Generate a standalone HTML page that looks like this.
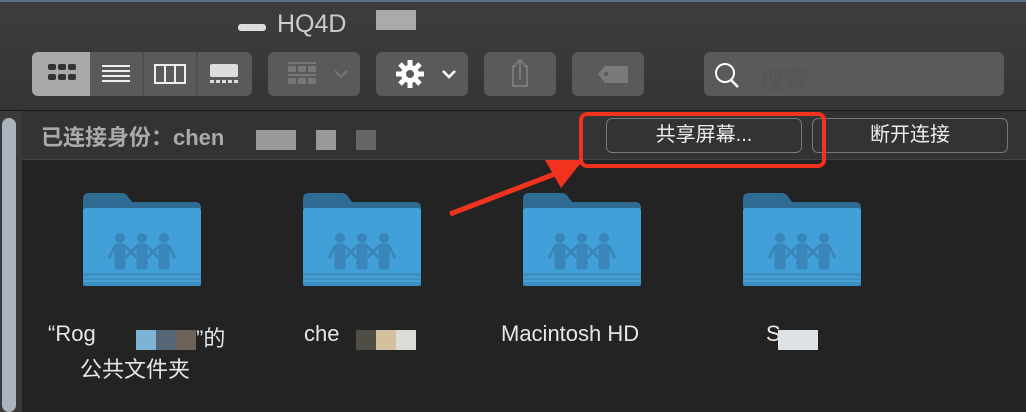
<!DOCTYPE html>
<html><head><meta charset="utf-8"><style>
body{margin:0;width:1026px;height:412px;overflow:hidden;background:#232323;font-family:"Liberation Sans","Noto Sans CJK SC",sans-serif;position:relative}
.abs{position:absolute}
.tb{left:0;top:0;width:1026px;height:110px;background:linear-gradient(#3d3d3d,#353535);border-bottom:1px solid #1a1a1a}
.btn{position:absolute;top:52px;height:44px;background:#5a5a5a;border-radius:6px}
.bar{left:22px;top:111px;width:1004px;height:48px;background:#333;border-bottom:1px solid #444}
.ob{position:absolute;top:118px;height:35px;border:1.5px solid #777;border-radius:6px;color:#eee;font-size:20px;text-align:center;line-height:33px;box-sizing:border-box}
.lbl{position:absolute;color:#e6e6e6;font-size:22px;text-align:center}
</style></head><body>
<div class="abs tb"></div>
<div class="abs" style="left:0;top:0;width:1026px;height:2px;background:#5a6e8a"></div>
<div class="abs" style="left:238px;top:24px;width:28px;height:7px;background:#ddd;border-radius:3px"></div>
<div class="abs" style="left:277px;top:10px;color:#ccc;font-size:25px">HQ4D</div>
<div class="abs" style="left:376px;top:10px;width:40px;height:20px;background:#aaa"></div>
<div class="btn" style="left:32px;width:220px"></div>
<div class="btn" style="left:32px;width:58px;background:#a9a9a9;border-radius:6px 0 0 6px"></div>
<svg class="abs" style="left:32px;top:52px" width="220" height="44">
<g fill="#333"><rect x="16" y="12" width="8" height="6" rx="2"/><rect x="26" y="12" width="8" height="6" rx="2"/><rect x="36" y="12" width="8" height="6" rx="2"/><rect x="16" y="22" width="8" height="6" rx="2"/><rect x="26" y="22" width="8" height="6" rx="2"/><rect x="36" y="22" width="8" height="6" rx="2"/></g>
<g stroke="#eee" stroke-width="2"><line x1="70" y1="14" x2="98" y2="14"/><line x1="70" y1="19" x2="98" y2="19"/><line x1="70" y1="24" x2="98" y2="24"/><line x1="70" y1="29" x2="98" y2="29"/></g>
<line x1="111" y1="0" x2="111" y2="44" stroke="#444"/><line x1="165" y1="0" x2="165" y2="44" stroke="#444"/>
<g fill="none" stroke="#eee" stroke-width="2"><rect x="123" y="13" width="30" height="18"/><line x1="133" y1="13" x2="133" y2="31"/><line x1="143" y1="13" x2="143" y2="31"/></g>
<rect x="178" y="12" width="28" height="13" fill="#ddd" rx="2"/><g fill="#ddd"><rect x="178" y="28" width="4" height="3"/><rect x="184" y="28" width="4" height="3"/><rect x="190" y="28" width="4" height="3"/><rect x="196" y="28" width="4" height="3"/><rect x="202" y="28" width="4" height="3"/></g>
</svg>
<div class="btn" style="left:268px;width:92px"></div>
<svg class="abs" style="left:268px;top:52px" width="92" height="44"><g fill="#777"><rect x="20" y="10" width="28" height="2"/><rect x="20" y="14" width="8" height="6" rx="1"/><rect x="30" y="14" width="8" height="6" rx="1"/><rect x="40" y="14" width="8" height="6" rx="1"/><rect x="20" y="22" width="28" height="2"/><rect x="20" y="26" width="8" height="6" rx="1"/><rect x="30" y="26" width="8" height="6" rx="1"/><rect x="40" y="26" width="8" height="6" rx="1"/></g><path d="M67 19l6 6 6-6" stroke="#777" stroke-width="2" fill="none"/></svg>
<div class="btn" style="left:376px;width:92px"></div>
<svg class="abs" style="left:376px;top:52px" width="92" height="44"><g transform="translate(34,22)"><circle r="9" fill="#fff"/><g stroke="#fff" stroke-width="5"><line x1="0" y1="-14" x2="0" y2="14"/><line x1="-14" y1="0" x2="14" y2="0"/><line x1="-10" y1="-10" x2="10" y2="10"/><line x1="-10" y1="10" x2="10" y2="-10"/></g><circle r="4" fill="#5a5a5a"/></g><path d="M67 19l6 6 6-6" stroke="#fff" stroke-width="2.5" fill="none"/></svg>
<div class="btn" style="left:484px;width:72px"></div>
<svg class="abs" style="left:484px;top:52px" width="72" height="44"><path d="M32 14h-3v20h14v-20h-3M36 28v-20M31 13l5-5 5 5" stroke="#7a7a7a" stroke-width="2" fill="none"/></svg>
<div class="btn" style="left:572px;width:72px"></div>
<svg class="abs" style="left:572px;top:52px" width="72" height="44"><path d="M26 22l7-8h23v17h-23z" fill="#7a7a7a"/><circle cx="34" cy="22" r="2" fill="#5a5a5a"/></svg>
<div class="btn" style="left:704px;width:300px"></div>
<svg class="abs" style="left:704px;top:52px" width="60" height="44"><circle cx="21" cy="21" r="9" stroke="#fff" stroke-width="2" fill="none"/><line x1="27" y1="28" x2="34" y2="35" stroke="#fff" stroke-width="2.5"/></svg>
<div class="abs" style="left:760px;top:60px;color:#555;font-size:24px">搜索</div>
<div class="abs" style="left:0;top:111px;width:22px;height:301px;background:#3a3a3a"></div>
<div class="abs" style="left:2px;top:118px;width:14px;height:294px;background:#a9b4bf;border-radius:7px"></div>
<div class="abs bar"></div>
<div class="abs" style="left:41px;top:120px;color:#aaa;font-size:22px;font-weight:bold">已连接身份：chen</div>
<div class="abs" style="left:256px;top:130px;width:40px;height:20px;background:#999"></div>
<div class="abs" style="left:316px;top:130px;width:20px;height:20px;background:#999"></div>
<div class="abs" style="left:356px;top:130px;width:20px;height:20px;background:#666"></div>
<div class="ob" style="left:606px;width:196px">共享屏幕...</div>
<div class="ob" style="left:812px;width:196px">断开连接</div>
<div class="abs" style="left:579px;top:112px;width:247px;height:56px;border:4px solid #f0321e;border-radius:8px;box-sizing:border-box"></div>
<svg class="abs" style="left:0;top:0" width="1026" height="412"><line x1="450" y1="214" x2="560" y2="172" stroke="#f0321e" stroke-width="5"/><path d="M583 160l-38 0 16 28z" fill="#f0321e"/></svg>
<svg width="0" height="0" style="position:absolute"><defs>
<g id="f"><path d="M0 6q0-6 6-6h33q4 0 7 5l3 4h63q6 0 6 6v72H0z" fill="#2f6c94"/><rect x="0" y="15" width="118" height="78" rx="3" fill="#42a0d8"/><rect x="0" y="80" width="118" height="13" rx="2" fill="#3a8fc4"/><line x1="0" y1="84" x2="118" y2="84" stroke="#5ab2e4"/><line x1="0" y1="88" x2="118" y2="88" stroke="#5ab2e4"/>
<g fill="#3a86bb" stroke="#3a86bb"><circle cx="37" cy="45" r="4.5"/><circle cx="59" cy="45" r="4.5"/><circle cx="81" cy="45" r="4.5"/><rect x="32" y="51" width="10" height="25" rx="2"/><rect x="54" y="51" width="10" height="25" rx="2"/><rect x="76" y="51" width="10" height="25" rx="2"/><path d="M32 53l-6 12M86 53l6 12M42 53l12 12M54 53l-12 12M64 53l12 12M76 53l-12 12" stroke-width="3" fill="none"/></g></g></defs></svg>
<svg class="abs" style="left:83px;top:193px" width="120" height="95"><use href="#f"/></svg>
<svg class="abs" style="left:303px;top:193px" width="120" height="95"><use href="#f"/></svg>
<svg class="abs" style="left:523px;top:193px" width="120" height="95"><use href="#f"/></svg>
<svg class="abs" style="left:743px;top:193px" width="120" height="95"><use href="#f"/></svg>
<div class="lbl" style="left:48px;top:321px">“Rog</div>
<div class="abs" style="left:136px;top:330px;width:20px;height:20px;background:#7fb3d6"></div>
<div class="abs" style="left:156px;top:330px;width:20px;height:20px;background:#566576"></div>
<div class="abs" style="left:176px;top:330px;width:20px;height:20px;background:#6c6259"></div>
<div class="lbl" style="left:196px;top:321px">”的</div>
<div class="lbl" style="left:80px;top:352px">公共文件夹</div>
<div class="lbl" style="left:304px;top:321px">che</div>
<div class="abs" style="left:356px;top:330px;width:20px;height:20px;background:#504d44"></div>
<div class="abs" style="left:376px;top:330px;width:20px;height:20px;background:#d4c19b"></div>
<div class="abs" style="left:396px;top:330px;width:20px;height:20px;background:#ddddd8"></div>
<div class="lbl" style="left:501px;top:321px">Macintosh HD</div>
<div class="lbl" style="left:766px;top:321px">S</div>
<div class="abs" style="left:778px;top:330px;width:40px;height:20px;background:#dde2e6"></div>
</body></html>
